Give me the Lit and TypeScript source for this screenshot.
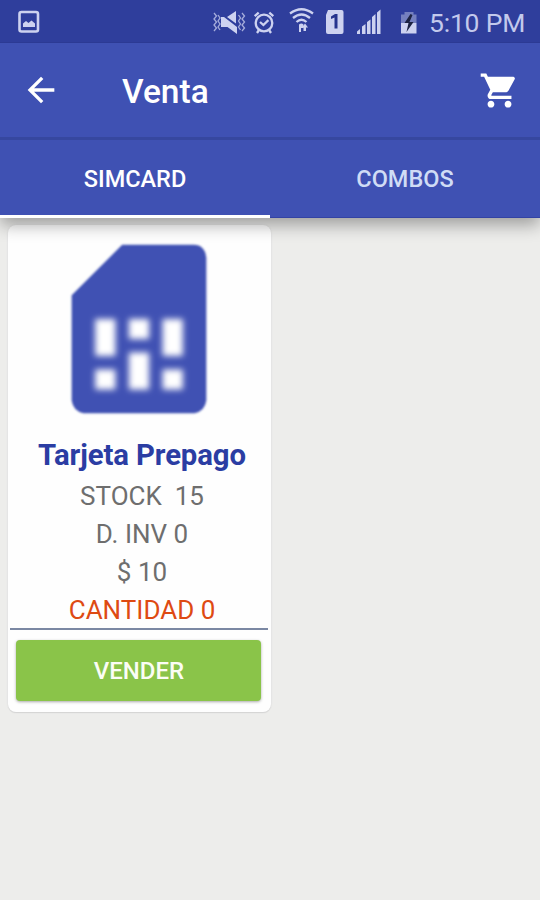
import { LitElement, html, css } from "lit";
import { customElement, state } from "lit/decorators.js";
import { classMap } from "lit/directives/class-map.js";

@customElement("status-bar")
class StatusBar extends LitElement {
  static styles = css`
    :host { display: flex; box-sizing: border-box; height: 43px; background: #2f3e9c; border-bottom: 1px solid #2c3a94; color: #cdd2f0; }
    .left { flex: 1; padding: 10px 0 0 18px; }
    svg { display: block; }
    .clock { width: 120px; padding-left: 9px; box-sizing: border-box; font: 400 26.500px/46px Roboto, sans-serif; white-space: nowrap; letter-spacing: -0.2px; color: #c3c9ec; }
  `;
  render() {
    return html`
      <div class="left">
        <svg width="22" height="23" viewBox="0 0 22 23">
          <rect x="1.500" y="2" width="18.500" height="19.500" rx="2" fill="none" stroke="#cdd2f0" stroke-width="2.600"/>
          <path d="M5 17v-3.500l3-2.500 2.500 2 3-2.500 3.500 3V17z" fill="#cdd2f0"/>
        </svg>
      </div>
      <svg width="209" height="42" viewBox="211 0 209 42" fill="#cdd2f0">
        <path d="M214 13l2.500 3-2.500 3 2.500 3-2.500 3 2.500 3-2.500 3M218 15l2 3-2 3 2 3-2 3 2 3M238.500 15l2 3-2 3 2 3-2 3 2 3M242 13l2.500 3-2.500 3 2.500 3-2.500 3 2.500 3-2.500 3" fill="none" stroke="#cdd2f0" stroke-width="1.300" opacity=".75"/>
        <path d="M227 17l9-6v12.500zM221 17h3l13 10v7l-9.500-7H221z"/>
        <g fill="none" stroke="#cdd2f0" stroke-width="2.300">
          <circle cx="264" cy="23" r="8.300"/>
          <path d="M260 22l3.400 3 5-4.800M254.700 16.200l4-3.600M273.300 16.200l-4-3.600M259 30l-2 3M269 30l2 3"/>
        </g>
        <g fill="none" stroke="#cdd2f0" stroke-width="2.300">
          <path d="M290 13.500Q301.500 5 313 13.500M293 18Q301.500 11 310 18M296.500 22Q301.500 17.500 306.500 22"/>
        </g>
        <path d="M299 24.500q2.500-2 4.500 0v3.500H301v4h-2z"/>
        <path d="M305 23.500l3 4h-2v3.500h-2.500v-3.500H302z"/>
        <path d="M328 10h13.500q2 0 2 2v20q0 2-2 2H328q-2 0-2-2V15z"/>
        <path d="M331 16.500l4-2.500h2.500v14.500h-3V17.500l-3.500 1.500z" fill="#26348e"/>
        <path d="M357 34v-2.500l3-2.500v5zM362 34v-7.500l3.500-2.500v10zM367 34V22l3.500-2.500V34zM372 34V17l3.500-3v20zM377 34V12.500l3.500-3V34z"/>
        <path d="M404.500 12h9v2.500h3V23h-15.500v-8.500h3.500z" fill="#7580bf"/>
        <path d="M401 23h15.500v10.500H401z"/>
        <path d="M410.500 14l-6 9h4l-2 9 7-10h-4l3-7z" fill="#1d2342"/>
      </svg>
      <div class="clock">5:10 PM</div>
    `;
  }
}

@customElement("product-card")
class ProductCard extends LitElement {
  static styles = css`
    :host { display: flex; flex-direction: column; box-sizing: border-box; width: 263px; height: 487px; background: #fefefe; border-radius: 8px; box-shadow: 0 0 2px #dadada, 0 1px 1px #d2d2d2; font-family: Roboto, sans-serif; text-align: center; }
    .sim { display: block; margin: 3px 0 0 29.500px; flex: none; }
    .info { padding-left: 5px; margin-top: 4px; color: #6e6e6e; font-size: 26px; line-height: 38px; white-space: pre; }
    .name { color: #2b3da3; font-size: 29.300px; font-weight: 700; line-height: 43px; letter-spacing: -0.1px; }
    .qty { color: #de4a12; }
    .rule { height: 2px; margin: -1px 3px 1px 2px; flex: none; background: #7b88a3; }
    .sell { display: block; margin: 9px 10px 0 8px; width: 245px; height: 61px; flex: none; border: 0; padding: 1px 0 0 1px; border-radius: 4px; background: #8ac449; box-shadow: 0 1px 3px #0005; color: #fbfdf5; font: 500 24px/61px Roboto, sans-serif; }
  `;
  render() {
    return html`
      <svg class="sim" width="202" height="202" viewBox="0 0 24 24" fill="#3f51b3">
        <defs>
          <filter id="edge"><feGaussianBlur stdDeviation=".14"/></filter>
          <filter id="soft" x="-10%" y="-10%" width="120%" height="120%"><feGaussianBlur stdDeviation=".36"/></filter>
        </defs>
        <path filter="url(#edge)" d="M20 3.500Q19.800 2 18.500 2H10L4 8v12.500Q4.200 21.800 5.400 22h13.200Q19.800 21.800 20 20.500z"/>
        <path filter="url(#soft)" fill="#fff" d="M6.800 10.800h2.400v4.400H6.800zM14.800 10.800h2.400v4.400h-2.400zM10.800 10.800h2.400v2.400h-2.400zM10.800 14.800h2.400v4.400h-2.400zM6.800 16.800h2.400v2.400H6.800zM14.800 16.800h2.400v2.400h-2.400z"/>
      </svg>
      <div class="info"><div class="name">Tarjeta Prepago</div><div>STOCK  15</div><div>D. INV 0</div><div>$ 10</div><div class="qty">CANTIDAD 0</div></div>
      <div class="rule"></div>
      <button class="sell">VENDER</button>
    `;
  }
}

@customElement("app-root")
class AppRoot extends LitElement {
  @state() private active = 0;
  private tabs = ["SIMCARD", "COMBOS"];
  static styles = css`
    :host { display: flex; flex-direction: column; height: 900px; overflow: hidden; background: #ededeb; font-family: Roboto, sans-serif; }
    .bar { display: flex; align-items: center; box-sizing: border-box; height: 97px; flex: none; background: #3f51b3; border-bottom: 3px solid #36479f; padding: 0 20px 0 21px; }
    .title { flex: 1; margin: 4px 0 0 61px; color: #fff; font-size: 33.500px; font-weight: 500; line-height: 40px; }
    .tabs { position: relative; z-index: 1; display: flex; height: 78px; flex: none; background: #3f51b3; box-shadow: 0 7px 16px #0005; clip-path: inset(0 0 -30px 0); }
    .tab { flex: 1; box-sizing: border-box; border: 0; padding: 0; background: none; color: #d0dcf5; font: 500 23.500px/78px Roboto, sans-serif; border-bottom: 1px solid #3343a4; }
    .tab.on { color: #fff; border-bottom: 3px solid #fff; }
    .list { padding: 7px 8px; }
  `;
  render() {
    return html`
      <status-bar></status-bar>
      <header class="bar">
        <svg width="40" height="40" viewBox="0 0 24 24" fill="#fff"><path d="M20 11H7.830l5.590-5.590L12 4l-8 8 8 8 1.410-1.410L7.830 13H20z"/></svg>
        <div class="title">Venta</div>
        <svg width="41" height="41" viewBox="0 0 24 24" fill="#fff"><path d="M7 18c-1.100 0-1.990.9-1.990 2S5.900 22 7 22s2-.9 2-2-.9-2-2-2zM1 2v2h2l3.600 7.590-1.350 2.450c-.16.280-.25.610-.25.960 0 1.100.9 2 2 2h12v-2H7.420c-.14 0-.25-.11-.25-.25l.03-.12.9-1.630h7.450c.75 0 1.410-.41 1.750-1.030l3.580-6.490A1 1 0 0 0 20 4H5.210l-.94-2zm16 16c-1.100 0-1.990.9-1.990 2s.89 2 1.990 2 2-.9 2-2-.9-2-2-2z"/></svg>
      </header>
      <nav class="tabs">
        ${this.tabs.map((t, i) => html`<button class=${classMap({ tab: true, on: this.active === i })} @click=${() => (this.active = i)}>${t}</button>`)}
      </nav>
      <main class="list"><product-card></product-card></main>
    `;
  }
}
